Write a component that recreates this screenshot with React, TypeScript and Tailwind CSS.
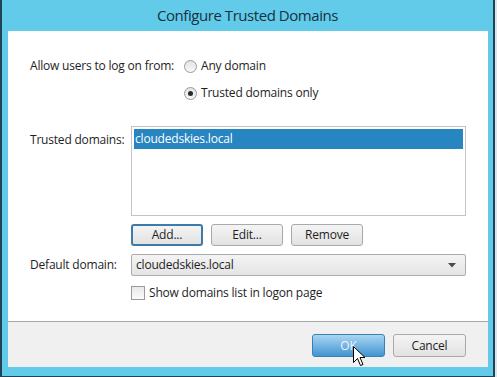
import React from "react";

const font = { fontFamily: '"Open Sans", "Noto Sans", sans-serif' };

function Radio({ checked, label }: { checked?: boolean; label: string }) {
  return (
    <div className="flex items-center h-[20px]">
      <div className="w-[13px] h-[13px] rounded-full border border-[#9a9a9a] bg-gradient-to-b from-[#e4e4e4] to-[#f8f8f8] flex items-center justify-center">
        {checked && <div className="w-[5px] h-[5px] rounded-full bg-[#2a2a2a]" />}
      </div>
      <span className="ml-[4px] text-[12px] tracking-[-0.2px] text-[#1e1e1e] leading-[20px]">{label}</span>
    </div>
  );
}

function Btn({ label, focused }: { label: string; focused?: boolean }) {
  return (
    <div
      className={
        "w-[72px] h-[22px] rounded-[3px] flex items-center justify-center text-[12px] tracking-[-0.2px] text-[#1e1e1e] bg-gradient-to-b from-[#f4f4f4] to-[#e2e2e2] " +
        (focused ? "border-2 border-[#3d7bab]" : "border border-[#a9a9a9]")
      }
    >
      {label}
    </div>
  );
}

export default function App() {
  return (
    <div className="w-[497px] h-[377px] flex bg-[#dde4e9] overflow-hidden" style={font}>
      <div className="w-[495px] h-[377px] flex flex-col border-l-2 border-r-2 border-b border-[#1f4456] bg-[#62cbea] relative">
        <div className="h-[31px] flex items-center justify-center text-[15px] tracking-[-0.45px] text-[#16323f]">
          Configure Trusted Domains
        </div>
        <div className="ml-[6px] w-[480px] h-[336px] flex flex-col">
          <div className="h-[290px] bg-white pl-[22px] pt-[25px] flex flex-col text-[12px] tracking-[-0.2px] text-[#1e1e1e]">
            <div className="flex">
              <div className="w-[154px] h-[20px] leading-[20px]">
                Allow users to log on from:
              </div>
              <div className="flex flex-col gap-[7px]">
                <Radio label="Any domain" />
                <Radio checked label="Trusted domains only" />
              </div>
            </div>

            <div className="flex mt-[23px]">
              <div className="w-[101px] pt-[4px] leading-[20px]">
                Trusted domains:
              </div>
              <div className="flex flex-col">
                <div className="w-[335px] h-[90px] border border-[#c4c4c4] p-[2px]">
                  <div className="h-[20px] bg-[#2785c1] text-white leading-[20px] pl-[1px]">
                    cloudedskies.local
                  </div>
                </div>
                <div className="flex gap-[8px] mt-[8px]">
                  <Btn label="Add..." focused />
                  <Btn label="Edit..." />
                  <Btn label="Remove" />
                </div>
              </div>
            </div>

            <div className="flex mt-[8px] items-center">
              <div className="w-[101px] leading-[20px]">Default domain:</div>
              <div className="w-[335px] h-[22px] rounded-[2px] border border-[#acacac] bg-gradient-to-b from-[#f4f4f4] to-[#e4e4e4] flex items-center pl-[4px] pr-[9px]">
                <span className="flex-1">cloudedskies.local</span>
                <svg width="8" height="5" viewBox="0 0 8 5">
                  <path d="M0 0 L8 0 L4 4.5 Z" fill="#4a4a4a" />
                </svg>
              </div>
            </div>

            <div className="flex mt-[9px] items-center ml-[101px]">
              <div className="w-[14px] h-[14px] border border-[#9a9a9a] bg-gradient-to-b from-[#e8e8e8] to-[#fbfbfb]" />
              <span className="ml-[4px] leading-[16px]">Show domains list in logon page</span>
            </div>
          </div>
          <div className="h-[1px] bg-[#a8a8a8]" />
          <div className="flex-1 bg-[#f0f0f0] flex justify-end items-start pt-[12px] pr-[22px] gap-[8px] text-[12px] tracking-[-0.2px]">
            <div className="w-[73px] h-[23px] rounded-[3px] border border-[#3c7fb1] bg-gradient-to-b from-[#a9d6f3] to-[#3f94d1] flex items-center justify-center text-[#eef6fc]">
              OK
            </div>
            <div className="w-[73px] h-[23px] rounded-[3px] border border-[#a9a9a9] bg-gradient-to-b from-[#f4f4f4] to-[#e2e2e2] flex items-center justify-center text-[#1e1e1e]">
              Cancel
            </div>
          </div>
        </div>
        <svg className="absolute left-[351px] top-[346px]" width="13" height="21" viewBox="0 0 13 21">
          <path d="M0.5 0.5 L0.5 16.5 L4.5 12.5 L7.5 19.5 L10 18.5 L7 11.5 L12 11.5 Z" fill="white" stroke="black" strokeWidth="1" strokeLinejoin="miter" />
        </svg>
      </div>
    </div>
  );
}
